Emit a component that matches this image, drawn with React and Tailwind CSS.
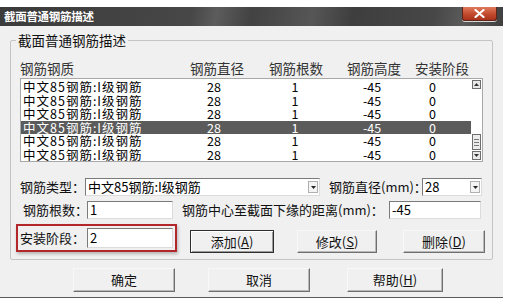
import React from "react";

const rows = [0, 1, 2, 3, 4, 5];

function Btn({ children, def, className }) {
  return (
    <div
      className={`flex items-center justify-center text-[13px] text-[#111] bg-[#f0f0f0] ${
        def
          ? "border border-[#2e2e2e] shadow-[inset_1px_1px_0_#fff,inset_-1px_-1px_0_#9a9a9a]"
          : "border border-t-[#f8f8f8] border-l-[#f8f8f8] border-r-[#6f6f6f] border-b-[#6f6f6f] shadow-[inset_-1px_-1px_0_#b9b9b9]"
      } ${className}`}
    >
      {children}
    </div>
  );
}

function Input({ value, className }) {
  return (
    <div
      className={`flex items-center bg-white border border-t-[#7a7a7a] border-l-[#7a7a7a] border-r-[#dcdcdc] border-b-[#dcdcdc] pl-[2px] text-[13px] text-black ${className}`}
    >
      {value}
    </div>
  );
}

function Combo({ value, className }) {
  return (
    <div
      className={`flex items-stretch bg-white border border-t-[#7a7a7a] border-l-[#7a7a7a] border-r-[#dcdcdc] border-b-[#dcdcdc] text-[13px] text-black ${className}`}
    >
      <div className="flex-1 flex items-center pl-[2px]">{value}</div>
      <div className="w-[10px] my-[2px] mr-[1px] border border-[#b0b0b0] bg-[#f4f4f4] flex items-center justify-center">
        <svg width="5" height="3" viewBox="0 0 5 3">
          <path d="M0 0h5L2.5 3z" fill="#222" />
        </svg>
      </div>
    </div>
  );
}

function ScrollBtn({ down }) {
  return (
    <div className="h-[9px] w-[9px] border border-[#6e6e6e] bg-[#e8e8e8] flex items-center justify-center">
      <svg width="5" height="3" viewBox="0 0 5 3">
        <path d={down ? "M0 0h5L2.5 3z" : "M0 3h5L2.5 0z"} fill="#333" />
      </svg>
    </div>
  );
}

export default function App() {
  return (
    <div className="w-[509px] h-[303px] bg-white overflow-hidden font-['Noto_Sans_CJK_SC','Liberation_Sans',sans-serif]">
      <div className="w-[503px] mt-[7px]">
        {/* title bar */}
        <div className="h-[19px] flex items-start justify-between bg-[linear-gradient(100deg,#3b3b3b_0%,#474747_38%,#5c5c5c_43%,#424242_50%,#565656_62%,#3e3e3e_70%,#474747_86%,#5b5b5b_92%,#3f3f3f_100%)]">
          <div className="pl-[4px] pt-[2px] text-[11.5px] leading-[15px] text-white font-semibold tracking-[-0.3px]">
            截面普通钢筋描述
          </div>
          <div className="mr-[6px] w-[35px] h-[14px] rounded-b-[3px] border border-[#5e2418] border-t-0 bg-[linear-gradient(#e07a5c,#c24a2e_55%,#a8321c)] shadow-[0_1px_0_#d8d8d8] flex items-center justify-center">
            <svg width="11" height="9" viewBox="0 0 11 9">
              <path d="M1.5 1l8 7M9.5 1l-8 7" stroke="#fff" strokeWidth="2.2" strokeLinecap="round" />
            </svg>
          </div>
        </div>

        {/* body */}
        <div className="h-[272px] bg-[#f0f0f0] border-b border-[#5a5a5a] pt-[7px]">
          <fieldset className="ml-[10px] w-[483px] border border-[#c4c4c4] rounded-[2px] pb-[6px]">
            <legend className="ml-[5px] px-[2px] text-[13.5px] leading-[14px] text-[#111]">
              截面普通钢筋描述
            </legend>

            {/* header */}
            <div className="mt-[14px] pl-[9px] flex text-[13.5px] leading-[14px] text-[#333] whitespace-nowrap">
              <span className="w-[54px]">钢筋钢质</span>
              <span className="ml-[116px] w-[54px]">钢筋直径</span>
              <span className="ml-[25px] w-[54px]">钢筋根数</span>
              <span className="ml-[24px] w-[54px]">钢筋高度</span>
              <span className="ml-[14px] w-[54px]">安装阶段</span>
            </div>

            {/* list */}
            <div className="mt-[3px] ml-[9px] w-[463px] h-[84px] bg-white border border-[#a8a8a8] flex">
              <div className="w-[450px] pt-[1px]">
                {rows.map((i) => (
                  <div
                    key={i}
                    className={`h-[13.5px] flex text-[12.5px] leading-[13.5px] whitespace-nowrap ${
                      i === 3 ? "bg-[#5b5b5b] text-white" : "text-black"
                    }`}
                  >
                    <span className="w-[167px] pl-[2px] tracking-[1px]">中文85钢筋:I级钢筋</span>
                    <span className="w-[52px] text-center">28</span>
                    <span className="w-[110px] text-center">1</span>
                    <span className="w-[44px] text-center">-45</span>
                    <span className="w-[77px] text-center">0</span>
                  </div>
                ))}
              </div>
              <div className="w-[11px] flex flex-col items-center pt-[1px] pb-[1px]">
                <ScrollBtn />
                <div className="flex-1" />
                <div className="w-[9px] h-[16px] mb-[1px] border border-[#6e6e6e] bg-[#ececec] flex flex-col items-center justify-center gap-[2px]">
                  <div className="w-[5px] h-px bg-[#777]" />
                  <div className="w-[5px] h-px bg-[#777]" />
                  <div className="w-[5px] h-px bg-[#777]" />
                </div>
                <ScrollBtn down />
              </div>
            </div>

            {/* type row */}
            <div className="mt-[16px] pl-[9px] flex items-center h-[18px] text-[13px] text-[#111] whitespace-nowrap">
              <span className="w-[65px]">钢筋类型：</span>
              <Combo value="中文85钢筋:I级钢筋" className="w-[235px] h-[18px]" />
              <span className="ml-[9px] w-[93px]">钢筋直径(mm)：</span>
              <Combo value="28" className="w-[60px] h-[18px]" />
            </div>

            {/* count row */}
            <div className="mt-[5px] pl-[12px] flex items-center h-[18px] text-[13px] text-[#111] whitespace-nowrap">
              <span className="w-[64px]">钢筋根数：</span>
              <Input value="1" className="w-[86px] h-[18px]" />
              <span className="ml-[9px] w-[207px]">钢筋中心至截面下缘的距离(mm)：</span>
              <Input value="-45" className="w-[92px] h-[18px]" />
            </div>

            {/* stage row */}
            <div className="mt-[5px] pl-[5px] flex items-start whitespace-nowrap">
              <div className="w-[161px] h-[28px] border-2 border-[#b3262a] shadow-[1px_2px_3px_rgba(0,0,0,0.25)] flex items-center pl-[2px] text-[13px] text-[#111]">
                <span className="w-[67px]">安装阶段：</span>
                <Input value="2" className="w-[86px] h-[20px]" />
              </div>
              <Btn def className="ml-[13px] mt-[6px] w-[84px] h-[23px]">
                添加(<span className="underline">A</span>)
              </Btn>
              <Btn className="ml-[23px] mt-[6px] w-[80px] h-[23px]">
                修改(<span className="underline">S</span>)
              </Btn>
              <Btn className="ml-[26px] mt-[6px] w-[82px] h-[23px]">
                删除(<span className="underline">D</span>)
              </Btn>
            </div>
          </fieldset>

          {/* bottom buttons */}
          <div className="mt-[8px] flex whitespace-nowrap">
            <Btn className="ml-[73px] w-[102px] h-[24px]">确定</Btn>
            <Btn className="ml-[33px] w-[102px] h-[24px]">取消</Btn>
            <Btn className="ml-[37px] w-[96px] h-[24px]">
              帮助(<span className="underline">H</span>)
            </Btn>
          </div>
        </div>
      </div>
    </div>
  );
}
